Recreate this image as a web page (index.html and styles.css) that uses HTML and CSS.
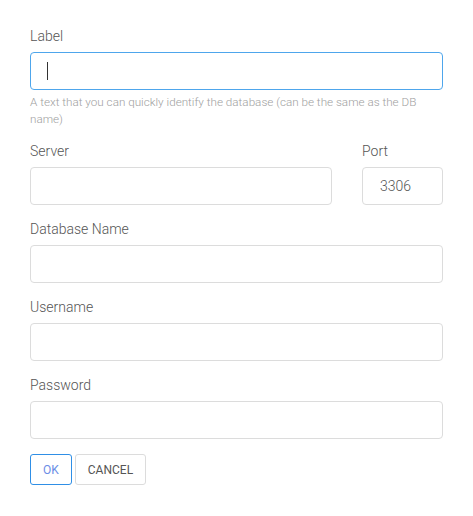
FILE: index.html
```html
<!DOCTYPE html>
<html lang="en">
<head>
<meta charset="utf-8">
<link rel="stylesheet" href="styles.css">
</head>
<body>
<form class="form">
  <div class="group">
    <label class="label">Label</label>
    <div class="input focused"><span class="caret"></span></div>
    <div class="help">A text that you can quickly identify the database (can be the same as the DB name)</div>
  </div>
  <div class="row">
    <div class="group">
      <label class="label">Server</label>
      <div class="input"></div>
    </div>
    <div class="group">
      <label class="label">Port</label>
      <div class="input"><span class="value">3306</span></div>
    </div>
  </div>
  <div class="group">
    <label class="label">Database Name</label>
    <div class="input"></div>
  </div>
  <div class="group">
    <label class="label">Username</label>
    <div class="input"></div>
  </div>
  <div class="group">
    <label class="label">Password</label>
    <div class="input"></div>
  </div>
  <div class="actions">
    <button type="button" class="btn btn-primary">OK</button>
    <button type="button" class="btn">CANCEL</button>
  </div>
</form>
</body>
</html>
```

FILE: styles.css
```css
* { box-sizing: border-box; }
html, body { margin: 0; padding: 0; background: #fff; }
body {
  font-family: Roboto, "Liberation Sans", sans-serif;
  font-weight: 300;
  color: #555;
}
.form {
  padding: 26px 30px 0 30px;
  display: flex;
  flex-direction: column;
}
.group {
  display: flex;
  flex-direction: column;
  margin-bottom: 14px;
}
.row {
  display: grid;
  grid-template-columns: 1fr 81px;
  column-gap: 30px;
}
.row .group { margin-bottom: 14px; }
.label {
  font-size: 14px;
  line-height: 20px;
  color: #555;
  margin-bottom: 6px;
}
.input {
  height: 38px;
  border: 1px solid #dcdcdc;
  border-radius: 4px;
  display: flex;
  align-items: center;
  padding: 0 16px;
  font-size: 14px;
  color: #555;
}
.input.focused {
  border-color: #4ea6ec;
}
.caret {
  display: block;
  width: 1px;
  height: 18px;
  background: #333;
}
.value {
  color: #555;
  padding-left: 1px;
}
.help {
  margin-top: 4px;
  font-size: 11.7px;
  line-height: 17px;
  color: #a0a0a0;
  margin-bottom: -1px;
}
.actions {
  display: flex;
  gap: 3px;
  margin-top: 1px;
}
.btn {
  height: 31px;
  padding: 0 12px;
  border: 1px solid #dcdcdc;
  border-radius: 3px;
  background: #fff;
  font-family: Roboto, "Liberation Sans", sans-serif;
  font-weight: 400;
  font-size: 12px;
  color: #555;
  cursor: pointer;
}
.btn-primary {
  border-color: #2f8fe6;
  color: #6b8ee6;
}
```
